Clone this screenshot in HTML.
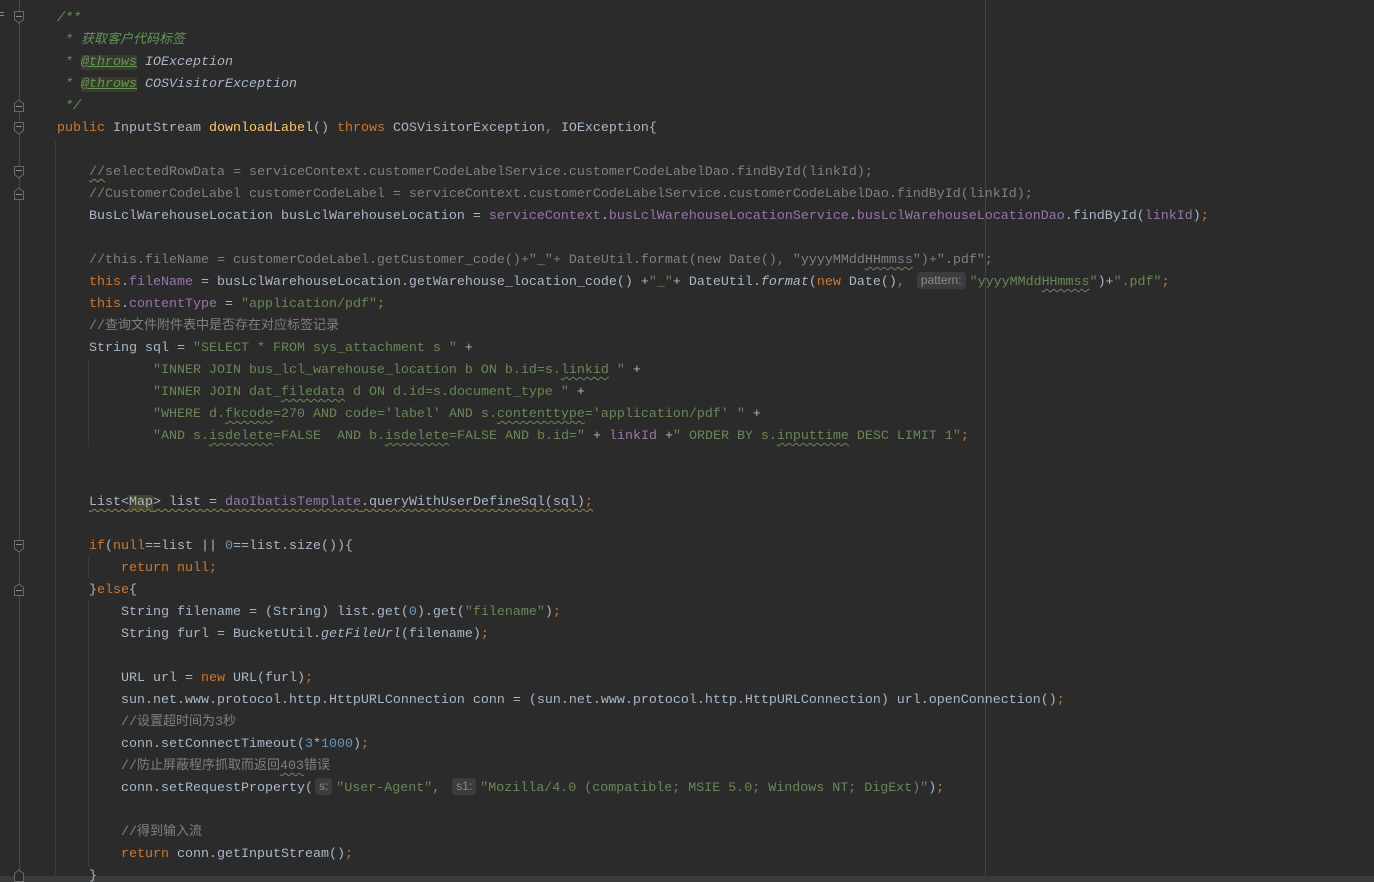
<!DOCTYPE html>
<html><head><meta charset="utf-8"><style>
html,body{margin:0;padding:0;background:#2b2b2b;width:1374px;height:882px;overflow:hidden;position:relative}
.l{position:absolute;left:57px;height:22px;line-height:22px;white-space:pre;font-family:"Liberation Mono","Noto Sans CJK SC",monospace;font-size:13.33px;color:#a9b7c6;margin-top:2px}
.k{color:#cc7832}.s{color:#6a8759}.c{color:#808080}.d{color:#629755;font-style:italic}.f{color:#9876aa}.n{color:#6897bb}.m{color:#ffc66d}.i{font-style:italic}
.dt{color:#629755;text-decoration:underline;background:#3a3b2c}
.dr{color:#a9b7c6;font-style:italic}
.w{text-decoration:underline wavy #6a8759;text-decoration-thickness:1px;text-underline-offset:3px}
.wy{text-decoration:underline wavy #8f8a3c;text-decoration-thickness:1px;text-underline-offset:3px}
.h{display:inline-block;background:#3b3c3e;color:#8c8c8c;font-family:"Liberation Sans",sans-serif;font-size:12px;line-height:17px;padding:0 4px;border-radius:4px;margin:0 4px 0 4px;vertical-align:1px}
.mp{background:#46462d}
.cj{font-family:"Noto Sans CJK SC",sans-serif;font-size:13px;line-height:0}
.g{position:absolute;width:1px;background:#3a3a3a}
</style></head><body>
<div style="position:absolute;left:19px;top:0;width:1px;height:876px;background:#4a4a4a"></div>
<div style="position:absolute;left:985px;top:0;width:1px;height:876px;background:#444"></div>
<div class="g" style="left:55px;top:140px;height:736px"></div>
<div class="g" style="left:88px;top:358px;height:88px"></div>
<div class="g" style="left:88px;top:556px;height:22px"></div>
<div class="g" style="left:88px;top:600px;height:266px"></div>
<div style="position:absolute;left:0;top:876px;width:1374px;height:6px;background:#3a3b3d"></div>
<div style="position:absolute;left:0;top:12px;width:4px;height:1px;background:#888"></div>
<div style="position:absolute;left:0;top:15px;width:4px;height:1px;background:#888"></div>
<svg width="40" height="882" style="position:absolute;left:0;top:0">
<g fill="#2b2b2b" stroke="#6a6a6a" stroke-width="1">
<path d="M14.5 11.5h9v8l-4.5 3.5l-4.5-3.5z"/><path d="M14.5 122.5h9v8l-4.5 3.5l-4.5-3.5z"/><path d="M14.5 166.5h9v8l-4.5 3.5l-4.5-3.5z"/><path d="M14.5 540.5h9v8l-4.5 3.5l-4.5-3.5z"/>
<path d="M14.5 111.5h9v-8l-4.5-3.5l-4.5 3.5z"/><path d="M14.5 199.5h9v-8l-4.5-3.5l-4.5 3.5z"/><path d="M14.5 595.5h9v-8l-4.5-3.5l-4.5 3.5z"/><path d="M14.5 881.5h9v-8l-4.5-3.5l-4.5 3.5z"/>
</g>
<g stroke="#8a8a8a"><path d="M16 16.5h6M16 126.5h6M16 170.5h6M16 544.5h6M16 106.5h6M16 194.5h6M16 590.5h6"/></g>
</svg>
<div class="l" style="top:6px"><span class="d">/**</span></div>
<div class="l" style="top:28px"><span class="d"> * <span class="cj">获取客户代码标签</span></span></div>
<div class="l" style="top:50px"><span class="d"> * </span><span class="dt i">@throws</span> <span class="dr">IOException</span></div>
<div class="l" style="top:72px"><span class="d"> * </span><span class="dt i">@throws</span> <span class="dr">COSVisitorException</span></div>
<div class="l" style="top:94px"><span class="d"> */</span></div>
<div class="l" style="top:116px"><span class="k">public </span>InputStream <span class="m">downloadLabel</span>() <span class="k">throws </span>COSVisitorException<span class="k">, </span>IOException{</div>
<div class="l" style="top:160px">    <span class="c"><span class="wy">//</span>selectedRowData = serviceContext.customerCodeLabelService.customerCodeLabelDao.findById(linkId);</span></div>
<div class="l" style="top:182px">    <span class="c">//CustomerCodeLabel customerCodeLabel = serviceContext.customerCodeLabelService.customerCodeLabelDao.findById(linkId);</span></div>
<div class="l" style="top:204px">    BusLclWarehouseLocation busLclWarehouseLocation = <span class="f">serviceContext</span>.<span class="f">busLclWarehouseLocationService</span>.<span class="f">busLclWarehouseLocationDao</span>.findById(<span class="f">linkId</span>)<span class="k">;</span></div>
<div class="l" style="top:248px">    <span class="c">//this.fileName = customerCodeLabel.getCustomer_code()+"_"+ DateUtil.format(new Date(), "yyyyMMdd<span class="w">HHmmss</span>")+".pdf";</span></div>
<div class="l" style="top:270px">    <span class="k">this</span>.<span class="f">fileName </span>= busLclWarehouseLocation.getWarehouse_location_code() +<span class="s">"_"</span>+ DateUtil.<span class="i">format</span>(<span class="k">new </span>Date()<span class="k">, </span><span class="h">pattern:</span><span class="s">"yyyyMMdd<span class="w">HHmmss</span>"</span>)+<span class="s">".pdf"</span><span class="k">;</span></div>
<div class="l" style="top:292px">    <span class="k">this</span>.<span class="f">contentType </span>= <span class="s">"application/pdf"</span><span class="k">;</span></div>
<div class="l" style="top:314px">    <span class="c">//<span class="cj">查询文件附件表中是否存在对应标签记录</span></span></div>
<div class="l" style="top:336px">    String sql = <span class="s">"SELECT * FROM sys_attachment s "</span> +</div>
<div class="l" style="top:358px">            <span class="s">"INNER JOIN bus_lcl_warehouse_location b ON b.id=s.<span class="w">linkid</span> "</span> +</div>
<div class="l" style="top:380px">            <span class="s">"INNER JOIN dat_<span class="w">filedata</span> d ON d.id=s.document_type "</span> +</div>
<div class="l" style="top:402px">            <span class="s">"WHERE d.<span class="w">fkcode</span>=270 AND code='label' AND s.<span class="w">contenttype</span>='application/pdf' "</span> +</div>
<div class="l" style="top:424px">            <span class="s">"AND s.<span class="w">isdelete</span>=FALSE  AND b.<span class="w">isdelete</span>=FALSE AND b.id="</span> + <span class="f">linkId </span>+<span class="s">" ORDER BY s.<span class="w">inputtime</span> DESC LIMIT 1"</span><span class="k">;</span></div>
<div class="l" style="top:490px">    <span class="wy">List&lt;<span class="mp">Map</span>&gt; list = <span class="f">daoIbatisTemplate</span>.queryWithUserDefineSql(sql)<span class="k">;</span></span></div>
<div class="l" style="top:534px">    <span class="k">if</span>(<span class="k">null</span>==list || <span class="n">0</span>==list.size()){</div>
<div class="l" style="top:556px">        <span class="k">return null;</span></div>
<div class="l" style="top:578px">    }<span class="k">else</span>{</div>
<div class="l" style="top:600px">        String filename = (String) list.get(<span class="n">0</span>).get(<span class="s">"filename"</span>)<span class="k">;</span></div>
<div class="l" style="top:622px">        String furl = BucketUtil.<span class="i">getFileUrl</span>(filename)<span class="k">;</span></div>
<div class="l" style="top:666px">        URL url = <span class="k">new </span>URL(furl)<span class="k">;</span></div>
<div class="l" style="top:688px">        sun.net.www.protocol.http.HttpURLConnection conn = (sun.net.www.protocol.http.HttpURLConnection) url.openConnection()<span class="k">;</span></div>
<div class="l" style="top:710px">        <span class="c">//<span class="cj">设置超时间为</span>3<span class="cj">秒</span></span></div>
<div class="l" style="top:732px">        conn.setConnectTimeout(<span class="n">3</span>*<span class="n">1000</span>)<span class="k">;</span></div>
<div class="l" style="top:754px">        <span class="c">//<span class="cj">防止屏蔽程序抓取而返回</span><span class="w">403</span><span class="cj">错误</span></span></div>
<div class="l" style="top:776px">        conn.setRequestProperty(<span class="h" style="margin-left:2px">s:</span><span class="s">"User-Agent"</span><span class="k">, </span><span class="h">s1:</span><span class="s">"Mozilla/4.0 (compatible; MSIE 5.0; Windows NT; DigExt)"</span>)<span class="k">;</span></div>
<div class="l" style="top:820px">        <span class="c">//<span class="cj">得到输入流</span></span></div>
<div class="l" style="top:842px">        <span class="k">return </span>conn.getInputStream()<span class="k">;</span></div>
<div class="l" style="top:864px">    }</div>
</body></html>
